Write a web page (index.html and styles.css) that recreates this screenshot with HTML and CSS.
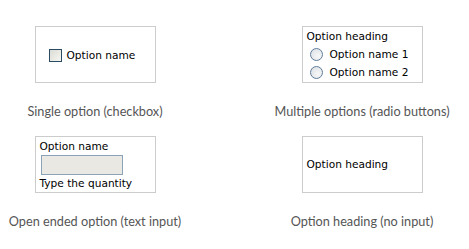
FILE: index.html
```html
<!DOCTYPE html>
<html lang="en">
<head>
  <meta charset="UTF-8">
  <title>Option types</title>
  <link rel="stylesheet" href="styles.css">
</head>
<body>
  <div class="grid">
    <div class="cell">
      <div class="box box-center">
        <div class="row">
          <span class="check"></span>
          <span>Option name</span>
        </div>
      </div>
      <div class="caption">Single option (checkbox)</div>
    </div>

    <div class="cell">
      <div class="box box-list">
        <div class="line">Option heading</div>
        <div class="row radio-row">
          <span class="radio"></span>
          <span>Option name 1</span>
        </div>
        <div class="row radio-row">
          <span class="radio"></span>
          <span>Option name 2</span>
        </div>
      </div>
      <div class="caption">Multiple options (radio buttons)</div>
    </div>

    <div class="cell">
      <div class="box box-list">
        <div class="line">Option name</div>
        <div class="field"></div>
        <div class="line">Type the quantity</div>
      </div>
      <div class="caption">Open ended option (text input)</div>
    </div>

    <div class="cell">
      <div class="box box-plain">
        <div class="line">Option heading</div>
      </div>
      <div class="caption">Option heading (no input)</div>
    </div>
  </div>
</body>
</html>
```

FILE: styles.css
```css
body {
  margin: 0;
  background: #ffffff;
  font-family: "DejaVu Sans", Verdana, sans-serif;
  color: #000;
}
.grid {
  display: grid;
  grid-template-columns: 190px 190px;
  column-gap: 77px;
  padding-top: 26px;
}
.cell {
  display: flex;
  flex-direction: column;
  align-items: center;
  height: 110px;
}
.box {
  box-sizing: border-box;
  width: 121px;
  height: 57px;
  border: 1px solid #cccccc;
  font-size: 10.6px;
  display: flex;
  flex-direction: column;
}
.box-center {
  justify-content: center;
  padding-left: 13px;
  padding-top: 1px;
}
.box-list {
  padding: 1px 0 0 4px;
}
.box-plain {
  justify-content: center;
  padding-left: 4px;
}
.line {
  height: 17px;
  line-height: 17px;
}
.row {
  display: flex;
  align-items: center;
  gap: 5px;
}
.radio-row {
  height: 18px;
  padding-left: 3px;
  gap: 7px;
}
.check {
  box-sizing: border-box;
  width: 13px;
  height: 13px;
  border: 1px solid #2b4a63;
  background: linear-gradient(135deg, #dcdcd6, #f6f6f2);
}
.radio {
  box-sizing: border-box;
  width: 13px;
  height: 13px;
  border: 1px solid #5f7c99;
  border-radius: 50%;
  background: radial-gradient(circle at 65% 65%, #f8f8f8, #d8dde3);
}
.field {
  box-sizing: border-box;
  width: 82px;
  height: 22px;
  margin: 0 0 0 1px;
  border: 1px solid #8ba3b8;
  background: #e9e8e3;
}
.caption {
  margin-top: 20px;
  font-family: Lato, "Open Sans", sans-serif;
  font-size: 12.7px;
  color: #555555;
  white-space: nowrap;
}
```
